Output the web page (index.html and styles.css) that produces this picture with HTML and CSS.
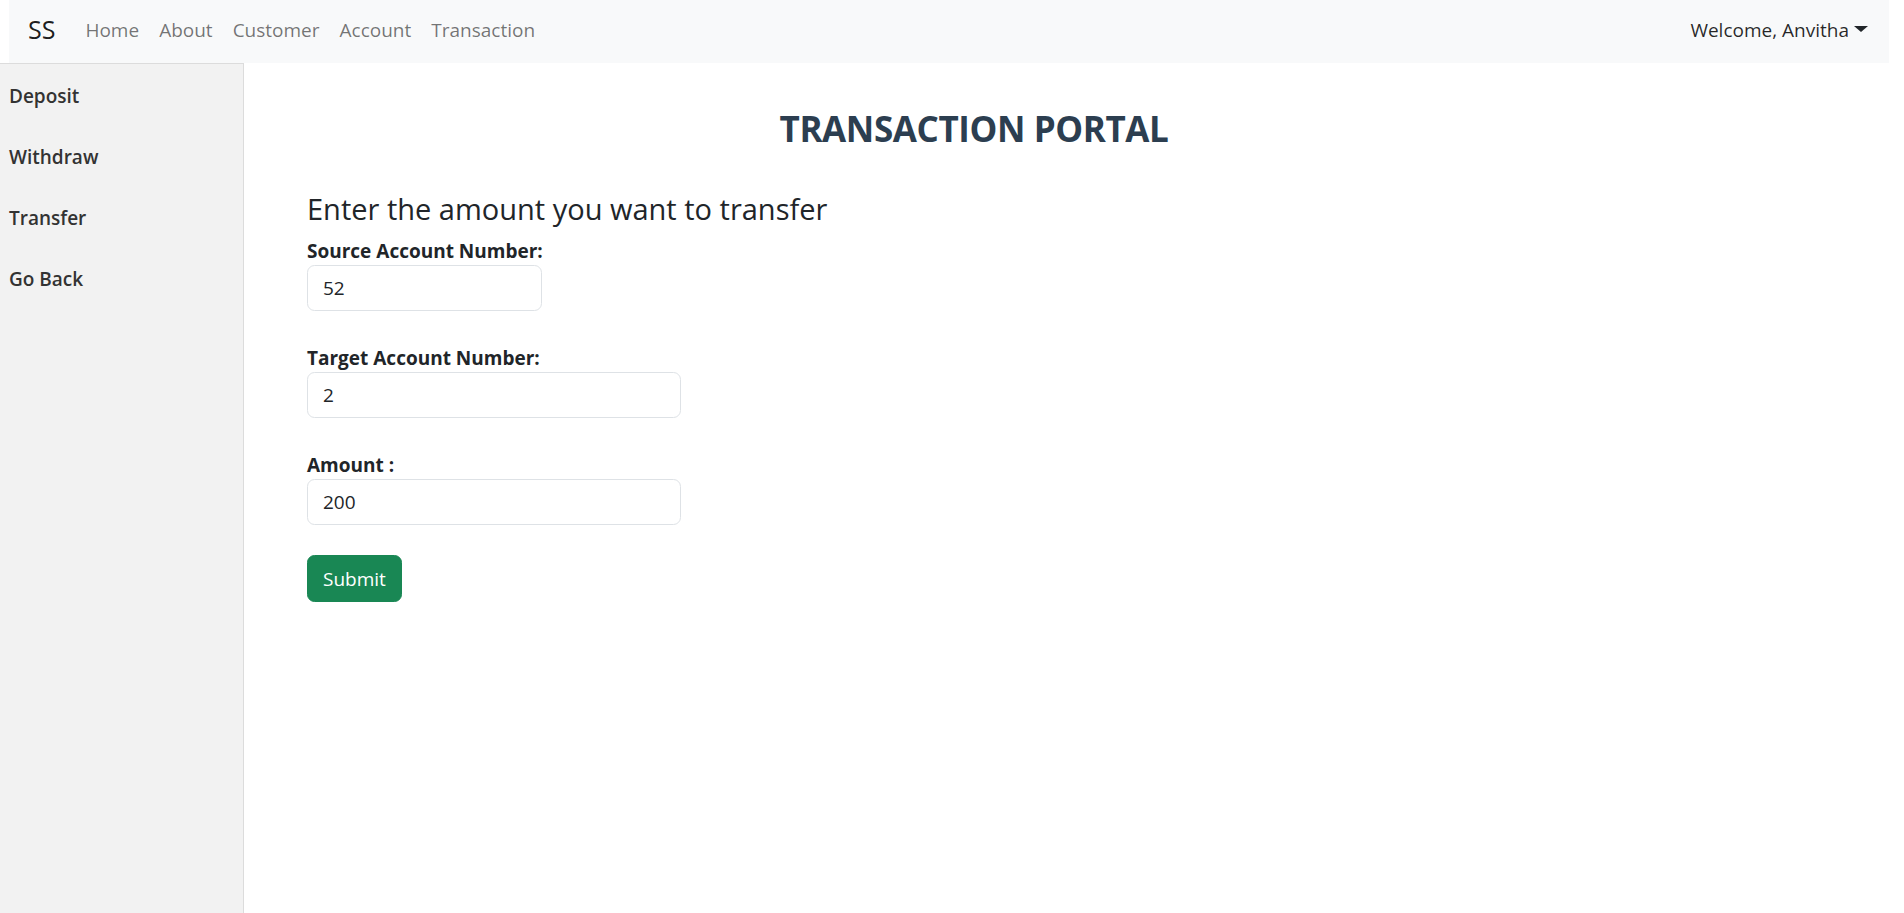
FILE: index.html
```html
<!DOCTYPE html>
<html lang="en">
<head>
<meta charset="utf-8">
<title>Transaction Portal</title>
<link rel="stylesheet" href="styles.css">
</head>
<body>
<nav class="navbar">
  <a class="brand" href="#">SS</a>
  <ul class="nav-links">
    <li><a href="#">Home</a></li>
    <li><a href="#">About</a></li>
    <li><a href="#">Customer</a></li>
    <li><a href="#">Account</a></li>
    <li><a href="#">Transaction</a></li>
  </ul>
  <div class="user">Welcome, Anvitha<span class="caret"></span></div>
</nav>
<div class="layout">
  <aside class="sidebar">
    <a class="side-item" href="#">Deposit</a>
    <a class="side-item" href="#">Withdraw</a>
    <a class="side-item" href="#">Transfer</a>
    <a class="side-item" href="#">Go Back</a>
  </aside>
  <main class="main">
    <div class="content">
      <h3 class="title">TRANSACTION PORTAL</h3>
      <h4 class="subtitle">Enter the amount you want to transfer</h4>
      <form class="form">
        <div class="group">
          <label class="label" for="src">Source Account Number:</label>
          <input class="input input-short" id="src" type="text" value="52">
        </div>
        <div class="group">
          <label class="label" for="tgt">Target Account Number:</label>
          <input class="input" id="tgt" type="text" value="2">
        </div>
        <div class="group">
          <label class="label" for="amt">Amount :</label>
          <input class="input" id="amt" type="text" value="200">
        </div>
        <button class="btn" type="button">Submit</button>
      </form>
    </div>
  </main>
</div>
</body>
</html>
```

FILE: styles.css
```css
* { box-sizing: border-box; }

html, body {
  margin: 0;
  padding: 0;
  height: 100%;
}

body {
  font-family: "Open Sans", "Noto Sans", sans-serif;
  font-size: 19px;
  color: #212529;
  background: #fff;
  display: flex;
  flex-direction: column;
}

a { text-decoration: none; }

.navbar {
  height: 63px;
  margin: 0 15px 0 9px;
  background: #f8f9fa;
  display: flex;
  align-items: center;
  padding: 0 11px 4px 19px;
  flex-shrink: 0;
}

.brand {
  font-size: 25px;
  color: rgba(0, 0, 0, 0.9);
  margin-right: 20px;
  line-height: 37px;
}

.nav-links {
  list-style: none;
  margin: 0;
  padding: 0;
  display: flex;
  flex: 1;
}

.nav-links a {
  display: block;
  padding: 0 10px;
  color: rgba(0, 0, 0, 0.55);
  line-height: 30px;
}

.user {
  color: rgba(0, 0, 0, 0.85);
  padding: 0 10px;
  line-height: 30px;
  display: flex;
  align-items: center;
}

.caret {
  display: inline-block;
  margin-left: 5px;
  width: 0;
  height: 0;
  border-top: 6px solid #212529;
  border-left: 7px solid transparent;
  border-right: 7px solid transparent;
  margin-bottom: 2px;
}

.layout {
  flex: 1;
  display: flex;
}

.sidebar {
  width: 244px;
  flex-shrink: 0;
  background: #f2f2f2;
  border-top: 1px solid #dcdcdc;
  border-right: 1px solid #dcdcdc;
  padding-top: 17px;
  display: flex;
  flex-direction: column;
  gap: 31px;
}

.side-item {
  display: block;
  padding-left: 9px;
  font-weight: 600;
  line-height: 30px;
  color: #333;
}

.main {
  flex: 1;
  padding: 45px 0 0 63px;
}

.content {
  width: 1334px;
}

.title {
  margin: 0;
  text-align: center;
  font-size: 35px;
  letter-spacing: -0.4px;
  line-height: 42px;
  font-weight: 700;
  color: #2c3e50;
}

.subtitle {
  margin: 41px 0 7px;
  font-size: 29px;
  line-height: 36px;
  font-weight: 500;
  color: #212529;
}

.form {
  display: flex;
  flex-direction: column;
  align-items: flex-start;
}

.group {
  display: flex;
  flex-direction: column;
  align-items: flex-start;
  margin-bottom: 30px;
}

.label {
  font-weight: 700;
  line-height: 30px;
  padding-top: 2px;
  margin-bottom: -1px;
}

.input {
  width: 374px;
  height: 46px;
  border: 1px solid #dee2e6;
  border-radius: 7.5px;
  padding: 0 15px;
  font-family: inherit;
  font-size: 19px;
  color: #212529;
  background: #fff;
}

.input-short {
  width: 235px;
}

.btn {
  height: 47px;
  padding: 0 15px;
  border: 1px solid #198754;
  background: #198754;
  color: #fff;
  border-radius: 7.5px;
  font-family: inherit;
  font-size: 19px;
  line-height: 30px;
}
```
